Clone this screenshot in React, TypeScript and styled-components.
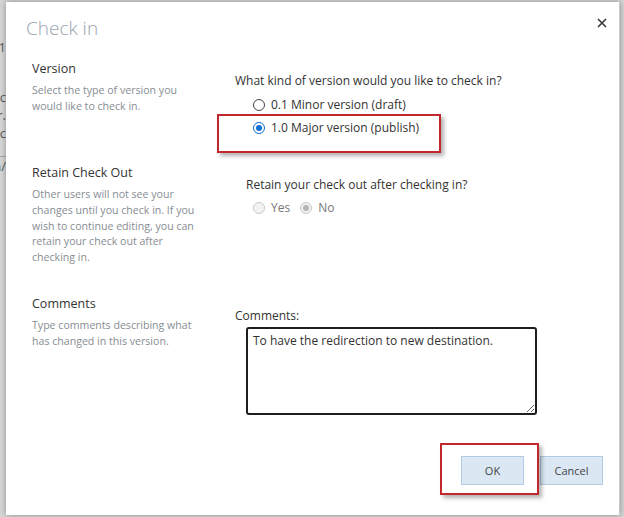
import React from 'react';
import styled, { createGlobalStyle } from 'styled-components';

const GlobalStyle = createGlobalStyle`
  html, body {
    margin: 0;
    padding: 0;
    background: #d2d2d2;
  }
  body {
    font-family: 'Open Sans', 'Liberation Sans', sans-serif;
  }
`;

const Screen = styled.div`
  position: relative;
  width: 624px;
  height: 517px;
  overflow: hidden;
  background: #d6d6d6;
`;

const PageBehind = styled.div`
  width: 6px;
  overflow: hidden;
  display: flex;
  flex-direction: column;
  padding-top: 38px;
  color: #5a5a5a;
  font-size: 13px;
  line-height: 18px;
`;

const PageLine = styled.div<{ $gap?: number }>`
  display: flex;
  justify-content: flex-end;
  white-space: nowrap;
  margin-top: ${(p) => p.$gap ?? 0}px;
`;

const PageRule = styled.div`
  margin-top: 14px;
  height: 1px;
  background: #a8a8a8;
`;

const Dialog = styled.div`
  position: absolute;
  left: 6px;
  top: 2px;
  width: 614px;
  height: 513px;
  box-sizing: border-box;
  background: #fff;
  border-right: 1px solid #c8c8c8;
  box-shadow: 0 0 6px rgba(0, 0, 0, 0.35);
  display: flex;
  flex-direction: column;
  padding: 13px 16px 0 26px;
`;

const Header = styled.div`
  display: flex;
  justify-content: space-between;
  align-items: flex-start;
  margin-left: -6px;
`;

const Title = styled.h1`
  margin: 0;
  font-size: 19px;
  line-height: 26px;
  font-weight: 300;
  color: #9ba4ae;
`;

const CloseButton = styled.button`
  border: 0;
  background: none;
  padding: 0;
  margin: 1px -6px 0 0;
  width: 14px;
  height: 14px;
  display: flex;
  align-items: center;
  justify-content: center;
  cursor: pointer;
`;

const Section = styled.div<{ $height: number }>`
  display: grid;
  grid-template-columns: 203px 1fr;
  height: ${(p) => p.$height}px;
`;

const Sections = styled.div`
  margin-top: 19px;
  display: flex;
  flex-direction: column;
`;

const Aside = styled.div`
  display: flex;
  flex-direction: column;
  gap: 5px;
  width: 172px;
`;

const AsideTitle = styled.div`
  font-size: 12.5px;
  line-height: 18px;
  color: #333;
`;

const AsideText = styled.div`
  font-size: 10.6px;
  line-height: 15.8px;
  color: #878d94;
`;

const Field = styled.div`
  padding-top: 12px;
  display: flex;
  flex-direction: column;
`;

const FieldLabel = styled.div<{ $indent?: number }>`
  font-size: 12px;
  line-height: 18px;
  color: #333;
  margin-left: ${(p) => p.$indent ?? 0}px;
`;

const RadioGroup = styled.div<{ $inline?: boolean }>`
  display: flex;
  flex-direction: ${(p) => (p.$inline ? 'row' : 'column')};
  gap: ${(p) => (p.$inline ? '10px' : '5px')};
  margin-left: 18px;
  margin-top: ${(p) => (p.$inline ? '5px' : '6px')};
`;

const RadioRow = styled.label<{ $disabled?: boolean }>`
  display: flex;
  align-items: center;
  gap: 6px;
  font-size: 12px;
  line-height: 18px;
  color: ${(p) => (p.$disabled ? '#777' : '#333')};
`;

const RadioDot = styled.span<{ $checked?: boolean; $disabled?: boolean }>`
  width: 12px;
  height: 12px;
  box-sizing: border-box;
  border-radius: 50%;
  flex-shrink: 0;
  display: flex;
  align-items: center;
  justify-content: center;
  background: ${(p) => (p.$disabled ? '#f2f2f2' : '#fff')};
  border: 1px solid
    ${(p) => (p.$disabled ? '#c9c9c9' : p.$checked ? '#0a6fd6' : '#444')};
  &::after {
    content: '';
    display: ${(p) => (p.$checked ? 'block' : 'none')};
    width: 6px;
    height: 6px;
    border-radius: 50%;
    background: ${(p) => (p.$disabled ? '#b5b5b5' : '#0a6fd6')};
  }
`;

const Comment = styled.textarea`
  margin: 2px 0 0 11px;
  width: 291px;
  height: 88px;
  box-sizing: border-box;
  border: 2px solid #1e1e1e;
  border-radius: 3px;
  padding: 4px 5px;
  font-family: 'Open Sans', 'Liberation Sans', sans-serif;
  font-size: 12px;
  line-height: 16px;
  color: #333;
  resize: both;
  outline: none;
`;

const Footer = styled.div`
  margin-top: 41px;
  display: flex;
  justify-content: flex-end;
  gap: 16px;
`;

const Button = styled.button`
  width: 63px;
  height: 29px;
  box-sizing: border-box;
  background: #dbe8f4;
  border: 1px solid #b3cbe2;
  font-family: 'Open Sans', 'Liberation Sans', sans-serif;
  font-size: 11px;
  color: #444;
  padding: 0;
  cursor: pointer;
`;

const Highlight = styled.div<{ $x: number; $y: number; $w: number; $h: number }>`
  position: absolute;
  left: ${(p) => p.$x}px;
  top: ${(p) => p.$y}px;
  width: ${(p) => p.$w}px;
  height: ${(p) => p.$h}px;
  box-sizing: border-box;
  border: 2px solid #c1272d;
  box-shadow: 3px 3px 4px rgba(0, 0, 0, 0.3);
  pointer-events: none;
`;

const CloseIcon = () => (
  <svg width="10" height="10" viewBox="0 0 10 10">
    <path d="M1 1 L9 9 M9 1 L1 9" stroke="#3c3c3c" strokeWidth="1.7" />
  </svg>
);

type RadioProps = {
  label: string;
  checked?: boolean;
  disabled?: boolean;
};

const Radio = ({ label, checked, disabled }: RadioProps) => (
  <RadioRow $disabled={disabled}>
    <RadioDot $checked={checked} $disabled={disabled} />
    <span>{label}</span>
  </RadioRow>
);

export default function App() {
  return (
    <>
      <GlobalStyle />
      <Screen>
        <PageBehind>
          <PageLine>Site1</PageLine>
          <PageLine $gap={32}>Doc</PageLine>
          <PageLine>Par.</PageLine>
          <PageLine>Doc</PageLine>
          <PageRule />
          <PageLine>n/</PageLine>
        </PageBehind>

        <Dialog>
          <Header>
            <Title>Check in</Title>
            <CloseButton aria-label="Close">
              <CloseIcon />
            </CloseButton>
          </Header>

          <Sections>
            <Section $height={104}>
              <Aside>
                <AsideTitle>Version</AsideTitle>
                <AsideText>
                  Select the type of version you would like to check in.
                </AsideText>
              </Aside>
              <Field>
                <FieldLabel>What kind of version would you like to check in?</FieldLabel>
                <RadioGroup>
                  <Radio label="0.1 Minor version (draft)" />
                  <Radio label="1.0 Major version (publish)" checked />
                </RadioGroup>
              </Field>
            </Section>

            <Section $height={131}>
              <Aside>
                <AsideTitle>Retain Check Out</AsideTitle>
                <AsideText>
                  Other users will not see your changes until you check in. If
                  you wish to continue editing, you can retain your check out
                  after checking in.
                </AsideText>
              </Aside>
              <Field>
                <FieldLabel $indent={11}>
                  Retain your check out after checking in?
                </FieldLabel>
                <RadioGroup $inline>
                  <Radio label="Yes" disabled />
                  <Radio label="No" checked disabled />
                </RadioGroup>
              </Field>
            </Section>

            <Section $height={120}>
              <Aside>
                <AsideTitle>Comments</AsideTitle>
                <AsideText>
                  Type comments describing what has changed in this version.
                </AsideText>
              </Aside>
              <Field>
                <FieldLabel>Comments:</FieldLabel>
                <Comment
                  readOnly
                  defaultValue="To have the redirection to new destination."
                />
              </Field>
            </Section>
          </Sections>

          <Footer>
            <Button>OK</Button>
            <Button>Cancel</Button>
          </Footer>

          <Highlight $x={211} $y={112} $w={224} $h={39} />
          <Highlight $x={434} $y={441} $w={99} $h={52} />
        </Dialog>
      </Screen>
    </>
  );
}
